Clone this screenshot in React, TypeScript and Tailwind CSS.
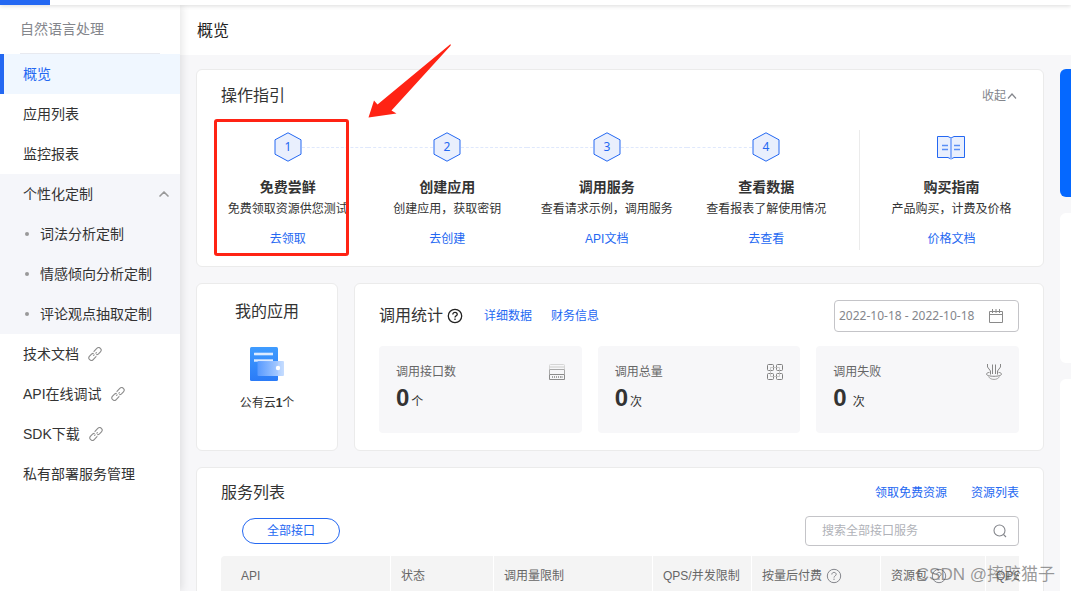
import React from "react";
import { ChevronUp } from "lucide-react";

const NUM_FONT = "font-['Noto_Sans','Noto_Sans_CJK_SC',sans-serif]";

function ChainIcon() {
  return (
    <svg viewBox="0 0 14 14" className="h-3.5 w-3.5 text-[#8c8c8c]" fill="none" stroke="currentColor" strokeWidth="1.1" strokeLinecap="round" aria-hidden="true">
      <g transform="rotate(-47 7 7)">
        <path d="M5.8 9.5H1.7A2.5 2.5 0 0 1 1.7 4.5H4.6A2.4 2.4 0 0 1 6.3 5.3" />
        <path d="M8.2 4.5H12.3A2.5 2.5 0 0 1 12.3 9.5H9.4A2.4 2.4 0 0 1 7.7 8.7" />
        <path d="M5 7H5.7M8.3 7H9" />
      </g>
    </svg>
  );
}

function HelpIcon({ className, strokeWidth }: { className: string; strokeWidth: number }) {
  return (
    <svg viewBox="0 0 16 16" className={className} fill="none" stroke="currentColor" strokeWidth={strokeWidth} aria-hidden="true">
      <circle cx="8" cy="8" r="6.7" />
      <path d="M5.8 6.5C5.8 5.2 6.8 4.4 8 4.4S10.2 5.2 10.2 6.4C10.2 7.8 8 7.9 8 9.6" />
      <path d="M8 10.6V12" />
    </svg>
  );
}

function Hexagon({ n }: { n: number }) {
  return (
    <svg viewBox="0 0 28 30" className="h-[30px] w-7 shrink-0" role="img" aria-label={`${n}`}>
      <path d="M14 .8L27 7.8V22.2L14 29.2L1 22.2V7.8Z" fill="#e9effd" stroke="#2468f2" strokeWidth="1" />
      <text x="14" y="19" textAnchor="middle" fontSize="12" fill="#2468f2" className={NUM_FONT}>
        {n}
      </text>
    </svg>
  );
}

function BookIcon() {
  return (
    <svg viewBox="0 0 28 26" className="h-[26px] w-7" fill="none" aria-hidden="true">
      <path d="M.5 1.5H11L14 3L17 1.5H27.5V22.5H17L14 24L11 22.5H.5Z" fill="#e9effd" stroke="#2468f2" />
      <path d="M14 3V24" stroke="#8fb2fa" strokeWidth="2" />
      <path d="M5 10.5H11M5 14.5H11M17 10.5H23M17 14.5H23" stroke="#5a8ef5" strokeWidth="1.3" />
    </svg>
  );
}

function CloudAppIcon() {
  return (
    <svg viewBox="0 0 34 34" className="h-[34px] w-[34px]" aria-hidden="true">
      <defs>
        <linearGradient id="doc" x1="0" y1="0" x2="0" y2="1">
          <stop offset="0" stopColor="#3f9cff" />
          <stop offset="1" stopColor="#2b7bf7" />
        </linearGradient>
        <linearGradient id="wallet" x1="0" y1="0" x2="1" y2="0">
          <stop offset="0" stopColor="#5a9bff" />
          <stop offset="1" stopColor="#c3dbff" />
        </linearGradient>
      </defs>
      <rect width="28" height="34" rx="1.5" fill="url(#doc)" />
      <path d="M4 7H23" stroke="#dcebff" strokeWidth="2.6" />
      <path d="M4 13.5H23" stroke="#dcebff" strokeWidth="2.4" />
      <rect x="7.5" y="14" width="26.5" height="15" rx="1" fill="url(#wallet)" fillOpacity=".95" />
      <circle cx="28" cy="21" r="2.2" fill="#fff" />
    </svg>
  );
}

function PortIcon() {
  return (
    <svg viewBox="0 0 16 16" className="h-4 w-4" fill="none" stroke="#8c8c8c" aria-hidden="true">
      <path d="M.5 5V1.5Q.5.5 1.5.5H14.5Q15.5.5 15.5 1.5V5" stroke="#d6d6d6" />
      <path d="M1 3H15" stroke="#e2e2e2" strokeWidth="2" />
      <path d="M.5 10V5.5H15.5V10" stroke="#aaa" />
      <path d="M.5 10.5H15.5V15.5H.5Z" />
      <path d="M3.5 12V14M5.5 12V14M7.5 12V14M9.5 12V14M11.5 12V14M13 12V14" strokeWidth=".8" />
    </svg>
  );
}

function GridIcon() {
  return (
    <svg viewBox="0 0 16 16" className="h-4 w-4" fill="none" stroke="#808080" aria-hidden="true">
      <rect x=".5" y=".5" width="6" height="6" rx="1" />
      <rect x="9.5" y=".5" width="6" height="6" rx="1" />
      <rect x=".5" y="9.5" width="6" height="6" rx="1" />
      <rect x="9.5" y="9.5" width="6" height="6" rx="1" />
      <path d="M3.5 3.5H12.5V12.5H3.5Z" stroke="#bdbdbd" strokeWidth=".8" />
    </svg>
  );
}

function FailIcon() {
  return (
    <svg viewBox="0 0 16 16" className="h-4 w-4" fill="none" stroke="#7a7a7a" aria-hidden="true">
      <path d="M1.5 0V3L4.5 7V10.5M14.5 0V3L11.5 7V10.5M6.5.5V10M9.5.5V10" strokeWidth=".9" />
      <path d="M3.5 8.3C1.6 8.7.5 9.3.5 10.1C.5 11.4 3.8 12.3 8 12.3S15.5 11.4 15.5 10.1C15.5 9.3 14.4 8.7 12.5 8.3" strokeWidth=".9" />
      <path d="M2.5 12.5C3.5 14.5 5.5 15.4 8 15.4S12.5 14.5 13.5 12.5" stroke="#999" strokeWidth=".9" />
    </svg>
  );
}

function CalendarIcon() {
  return (
    <svg viewBox="0 0 14 14" className="h-3.5 w-3.5" fill="none" stroke="#8a8a8a" aria-hidden="true">
      <path d="M.5 2.5H13.5V13.5H.5ZM.5 5.5H13.5" />
      <path d="M3.5 0V4M7 0V4M10.5 0V4" />
    </svg>
  );
}

const topItems = ["应用列表", "监控报表"];
const subItems = ["词法分析定制", "情感倾向分析定制", "评论观点抽取定制"];
const outerItems = ["技术文档", "API在线调试", "SDK下载"];

const steps = [
  { title: "免费尝鲜", desc: "免费领取资源供您测试", link: "去领取" },
  { title: "创建应用", desc: "创建应用，获取密钥", link: "去创建" },
  { title: "调用服务", desc: "查看请求示例，调用服务", link: "API文档" },
  { title: "查看数据", desc: "查看报表了解使用情况", link: "去查看" },
];

const stats = [
  { label: "调用接口数", unit: "个", icon: <PortIcon />, gap: "gap-0.5" },
  { label: "调用总量", unit: "次", icon: <GridIcon />, gap: "gap-0.5" },
  { label: "调用失败", unit: "次", icon: <FailIcon />, gap: "gap-1.5" },
];

const columns = [
  { name: "API", width: "w-[170px]", pad: "pl-5", help: false },
  { name: "状态", width: "w-[103px]", pad: "pl-2.5", help: false },
  { name: "调用量限制", width: "w-[159px]", pad: "pl-2.5", help: false },
  { name: "QPS/并发限制", width: "w-[99px]", pad: "pl-2.5", help: false },
  { name: "按量后付费", width: "w-[129px]", pad: "pl-2.5", help: true },
  { name: "资源包", width: "w-[105px]", pad: "pl-2.5", help: true },
  { name: "QPS", width: "w-[150px]", pad: "pl-2.5", help: false },
];

function Sidebar() {
  const row = "flex h-10 items-center pl-[23px]";
  return (
    <aside className="z-10 w-[180px] shrink-0 bg-white text-sm text-[#333] shadow-[2px_0_8px_rgba(0,0,0,0.1)]">
      <div className="mx-5 flex h-[49px] items-center border-b border-[#e8eaf0] text-[#84868c]">自然语言处理</div>
      <nav>
        <a href="#overview" className="flex h-10 items-center border-l-4 border-[#2468f2] bg-[#f0f7ff] pl-[19px] text-[#2468f2]">
          概览
        </a>
        {topItems.map((t) => (
          <a key={t} href="#" className={row}>
            {t}
          </a>
        ))}
        <div className="bg-[#f5f6fa]">
          <button type="button" className="flex h-10 w-full items-center justify-between pr-2 pl-[23px]">
            个性化定制
            <ChevronUp className="h-4 w-4 text-[#999]" strokeWidth={2.5} />
          </button>
          {subItems.map((t) => (
            <a key={t} href="#" className="flex h-10 items-center gap-[11px] pl-[25px]">
              <span className="h-1 w-1 rounded-full bg-[#999]" />
              {t}
            </a>
          ))}
        </div>
        {outerItems.map((t) => (
          <a key={t} href="#" className={`${row} gap-[9px]`}>
            {t}
            <ChainIcon />
          </a>
        ))}
        <a href="#" className={row}>
          私有部署服务管理
        </a>
      </nav>
    </aside>
  );
}

function GuideText({ title, desc, link }: { title: string; desc: string; link: string }) {
  return (
    <>
      <h3 className="mt-[15px] text-sm leading-5 font-bold">{title}</h3>
      <p className="mt-0.5 text-xs leading-5 whitespace-nowrap">{desc}</p>
      <a href="#" className="mt-2.5 text-xs leading-5 text-[#2468f2]">
        {link}
      </a>
    </>
  );
}

const card = "rounded-md border border-[#ebebeb] bg-white";

export default function App() {
  return (
    <div className="relative flex h-screen flex-col overflow-hidden bg-[#f7f7f9] font-['Liberation_Sans','Noto_Sans_CJK_SC',sans-serif] text-[#333]">
      <header className="z-20 h-[5px] shrink-0 bg-white shadow-[0_1px_4px_rgba(0,0,0,0.15)]">
        <div className="h-full w-[50px] bg-[#2468f2]" />
      </header>
      <div className="flex min-h-0 flex-1">
        <Sidebar />
        <main className="min-w-0 flex-1">
          <h1 className="flex h-[50px] items-center bg-white pt-0.5 pl-[17px] text-base text-[#222]">概览</h1>
          <div className="flex gap-4 pt-3.5 pl-4">
            <div className="flex min-w-0 flex-1 flex-col gap-4">
              <section className={`${card} pt-3.5 pb-4`}>
                <div className="flex h-6 items-center justify-between pr-[26px] pl-6">
                  <h2 className="text-base">操作指引</h2>
                  <button type="button" className="flex items-center gap-px text-xs text-[#84868c]">
                    收起
                    <svg viewBox="0 0 10 8" className="h-2 w-2.5" fill="none" stroke="currentColor" strokeWidth="1.2" aria-hidden="true">
                      <path d="M1 6.5L5 2L9 6.5" />
                    </svg>
                  </button>
                </div>
                <div className="mt-[22px] flex h-30">
                  <ol className="grid flex-1 grid-cols-4 pr-[13px] pl-[11px]">
                    {steps.map((s, i) => (
                      <li key={s.title} className="flex flex-col items-center pt-0.5">
                        <div className="flex w-full items-center">
                          <span className={`flex-1 border-t border-dashed ${i === 0 ? "border-transparent" : "border-[#dfe8fc]"}`} />
                          <Hexagon n={i + 1} />
                          <span className={`flex-1 border-t border-dashed ${i === 3 ? "border-transparent" : "border-[#dfe8fc]"}`} />
                        </div>
                        <GuideText {...s} />
                      </li>
                    ))}
                  </ol>
                  <div className="flex w-[184px] flex-col items-center border-l border-[#ebebeb] pt-0.5">
                    <div className="flex h-[30px] items-center pt-0.5 pr-0.5">
                      <BookIcon />
                    </div>
                    <GuideText title="购买指南" desc="产品购买，计费及价格" link="价格文档" />
                  </div>
                </div>
              </section>

              <div className="flex gap-4">
                <section className={`${card} flex w-[142px] shrink-0 flex-col items-center pt-4`}>
                  <h2 className="text-base leading-6">我的应用</h2>
                  <div className="mt-[23px]">
                    <CloudAppIcon />
                  </div>
                  <p className="mt-3 text-xs leading-5">
                    公有云<b>1</b>个
                  </p>
                </section>
                <section className={`${card} min-w-0 flex-1 px-6 pt-4 pb-[17px]`}>
                  <div className="flex h-8 items-center">
                    <h2 className="text-base">调用统计</h2>
                    <HelpIcon className="ml-1 h-4 w-4 text-[#222]" strokeWidth={1.3} />
                    <a href="#" className="ml-[21px] text-xs text-[#2468f2]">
                      详细数据
                    </a>
                    <a href="#" className="ml-[19px] text-xs text-[#2468f2]">
                      财务信息
                    </a>
                    <label className="ml-auto flex h-8 w-[185px] items-center rounded-sm border border-[#c4c4c8] pr-[15px] pl-1">
                      <input
                        type="text"
                        aria-label="日期范围"
                        defaultValue="2022-10-18 - 2022-10-18"
                        className={`min-w-0 flex-1 text-xs text-[#84868c] outline-none ${NUM_FONT}`}
                      />
                      <CalendarIcon />
                    </label>
                  </div>
                  <div className="mt-3.5 grid grid-cols-3 gap-4">
                    {stats.map((s) => (
                      <div key={s.label} className="h-[87px] rounded-sm bg-[#f7f7f9] px-[17px] pt-[18px]">
                        <div className="flex h-4 items-center justify-between text-xs text-[#666]">
                          {s.label}
                          {s.icon}
                        </div>
                        <div className={`mt-0.5 flex items-baseline text-xs ${s.gap}`}>
                          <strong className="text-2xl">0</strong>
                          {s.unit}
                        </div>
                      </div>
                    ))}
                  </div>
                </section>
              </div>

              <section className={`${card} px-6 pt-[13px] pb-6`}>
                <div className="flex h-6 items-center gap-6 text-xs text-[#2468f2]">
                  <h2 className="mr-auto text-base text-[#333]">服务列表</h2>
                  <a href="#">领取免费资源</a>
                  <a href="#">资源列表</a>
                </div>
                <div className="mt-[11px] flex h-[30px] items-center justify-between pl-[21px]">
                  <button type="button" className="h-[26px] w-[98px] rounded-full border border-[#2468f2] text-xs text-[#2468f2]">
                    全部接口
                  </button>
                  <label className="flex h-full w-[214px] items-center rounded-sm border border-[#c4c4c8] pr-[11px] pl-4">
                    <input
                      type="text"
                      aria-label="搜索全部接口服务"
                      placeholder="搜索全部接口服务"
                      className="min-w-0 flex-1 text-xs outline-none placeholder:text-[#b0b2b8]"
                    />
                    <svg viewBox="0 0 14 14" className="h-3.5 w-3.5" fill="none" stroke="#84868c" strokeWidth="1.1" aria-hidden="true">
                      <circle cx="6.5" cy="6.5" r="5.5" />
                      <path d="M10.5 10.5L13 13" />
                    </svg>
                  </label>
                </div>
                <div className="mt-2.5 overflow-hidden rounded-tl-sm">
                  <table className="w-[915px] table-fixed border-separate border-spacing-0 text-xs text-[#666]">
                    <thead>
                      <tr className="h-10 bg-[#f4f4f4]">
                        {columns.map((c) => (
                          <th key={c.name} scope="col" className={`${c.width} ${c.pad} border-r border-white text-left font-normal whitespace-nowrap`}>
                            <span className="flex items-center gap-1">
                              {c.name}
                              {c.help && <HelpIcon className="h-4 w-4 text-[#84868c]" strokeWidth={1} />}
                            </span>
                          </th>
                        ))}
                      </tr>
                    </thead>
                  </table>
                </div>
              </section>
            </div>

            <div className="flex w-[11px] shrink-0 flex-col gap-4">
              <div className="h-32 rounded-l-md bg-[#0568ff]" />
              <div className="h-[150px] rounded-l-md bg-white" />
              <div className="min-h-60 flex-1 rounded-l-md bg-white" />
            </div>
          </div>
        </main>
      </div>

      <div className="pointer-events-none absolute top-[119px] left-[214px] z-30 h-[137px] w-[135px] rounded-[3px] border-3 border-[#ff2314]" />
      <svg viewBox="0 0 84 76" className="pointer-events-none absolute top-[43px] left-[368px] z-30 h-[76px] w-[84px]" aria-hidden="true">
        <path d="M82.3 1.3C83 1.7 82.9 2.3 82.3 3L23.5 67.5L28.5 70.5L.5 74.5L6 57.5L9.5 61.5Z" fill="#ff2314" />
      </svg>
      <div className="pointer-events-none absolute right-4 bottom-1 z-30 text-[17px] whitespace-nowrap text-[#555]/60">CSDN @摔跤猫子</div>
    </div>
  );
}
